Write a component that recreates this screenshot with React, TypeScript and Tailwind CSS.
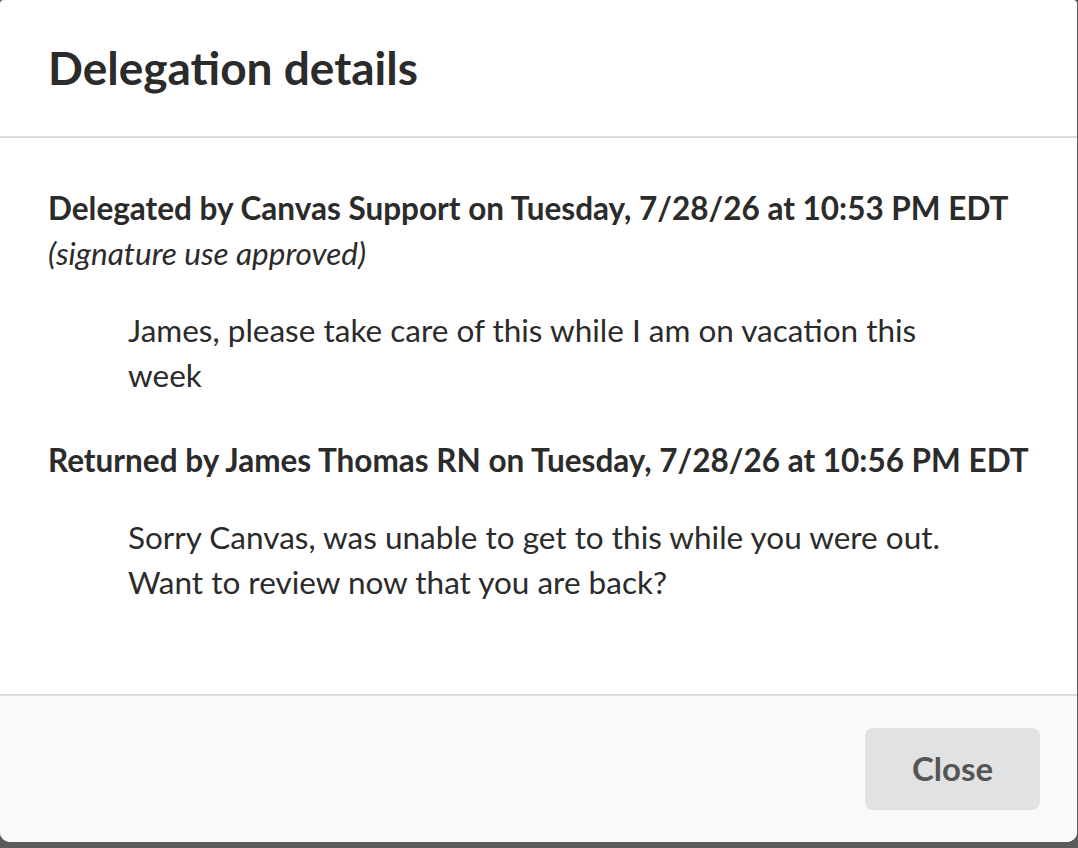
const App = () => {
  return (
    <div className="h-screen w-full bg-[#5c5c5c] font-['Lato','Open_Sans',sans-serif] text-[#2b2b2b]">
      <div className="flex h-[842px] w-[1077px] flex-col overflow-hidden rounded-t-[4px] rounded-b-[10px] bg-white">
        <div className="flex h-[138px] shrink-0 items-center border-b-2 border-[#dadbdc] px-12">
          <h1 className="text-[46px] font-bold leading-none">Delegation details</h1>
        </div>

        <div className="flex-1 px-12 pt-12 text-[31.5px] leading-[45px]">
          <p className="font-bold">
            Delegated by Canvas Support on Tuesday, 7/28/26 at 10:53 PM EDT
          </p>
          <p className="italic">(signature use approved)</p>
          <p className="mt-8 mr-16 mb-10 ml-20">
            James, please take care of this while I am on vacation this week
          </p>

          <p className="font-bold">
            Returned by James Thomas RN on Tuesday, 7/28/26 at 10:56 PM EDT
          </p>
          <p className="mt-8 mr-16 mb-10 ml-20">
            Sorry Canvas, was unable to get to this while you were out. Want to review now that you are back?
          </p>
        </div>

        <div className="flex h-[148px] shrink-0 items-center justify-end border-t-2 border-[#dadbdc] bg-[#f8f9fa] pr-[37px]">
          <button className="h-[82px] w-[175px] rounded-[8px] bg-[#e1e2e4] text-[33px] font-bold text-[#555555]">
            Close
          </button>
        </div>
      </div>
    </div>
  );
};

export default App;
